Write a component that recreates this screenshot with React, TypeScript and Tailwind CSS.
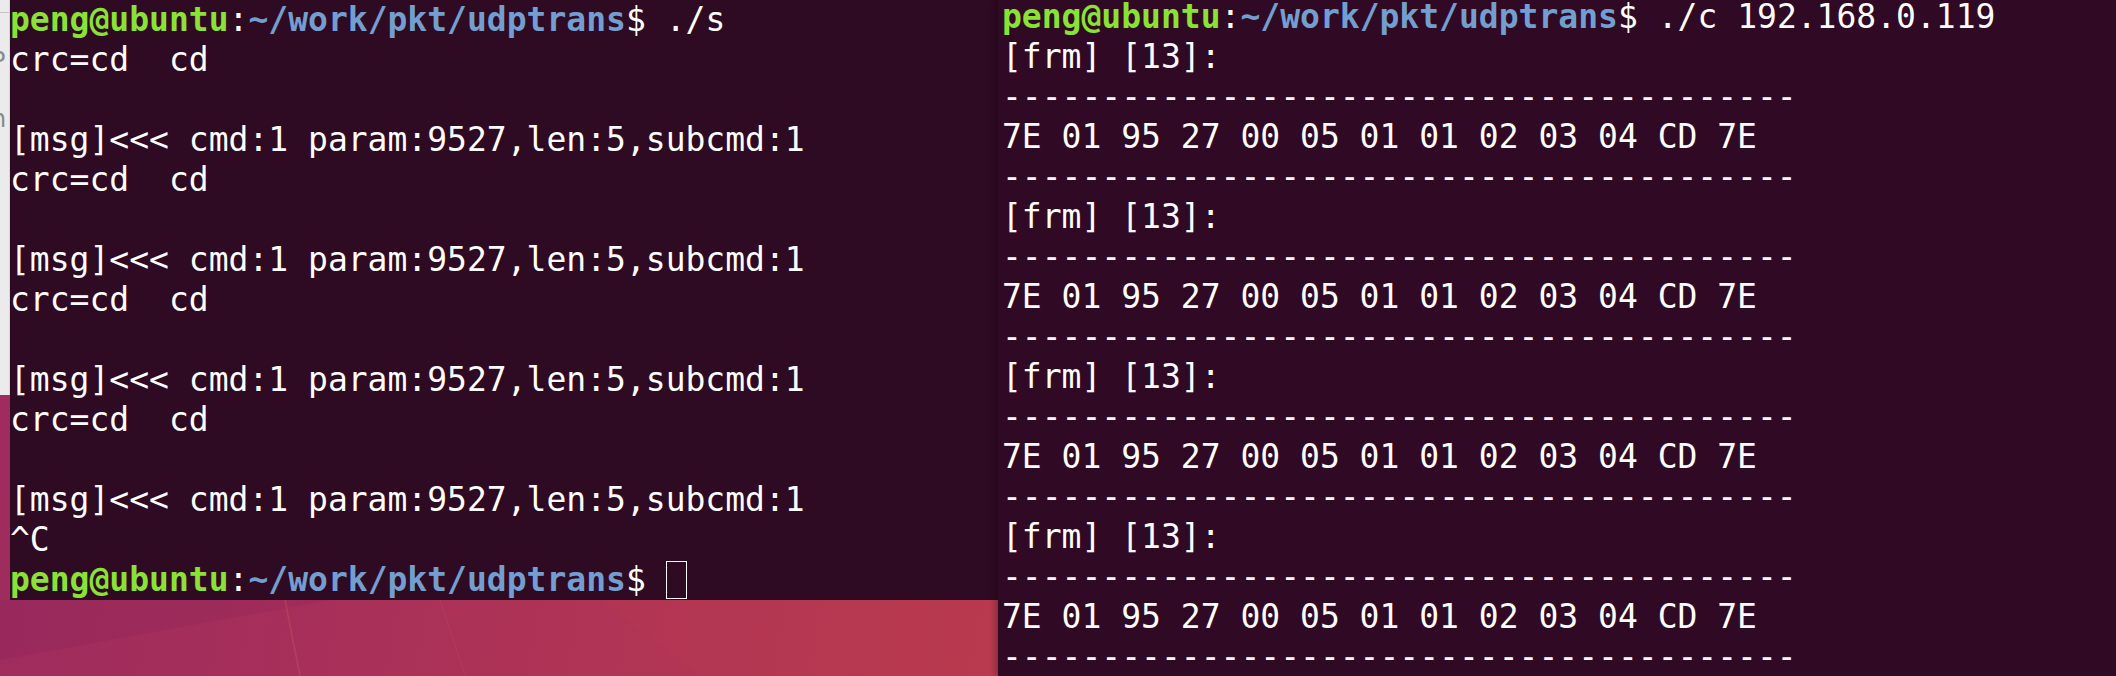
import React from "react";

const MSG = "[msg]<<< cmd:1 param:9527,len:5,subcmd:1";
const CRC = "crc=cd  cd";
const HEX = "7E 01 95 27 00 05 01 01 02 03 04 CD 7E";
const DASH = "-".repeat(40);

function Prompt(props: { cmd?: string; cursor?: boolean }) {
  return (
    <>
      <span className="font-bold text-[#8ae234]">peng@ubuntu</span>
      <span>:</span>
      <span className="font-bold text-[#729fcf]">~/work/pkt/udptrans</span>
      <span>$ </span>
      {props.cmd ? <span>{props.cmd}</span> : null}
      {props.cursor ? (
        <span className="inline-block align-top w-[21px] h-[38px] mt-[1px] border-[1.5px] border-white" />
      ) : null}
    </>
  );
}

function Line(props: { children?: React.ReactNode; first?: boolean }) {
  // the client window is scrolled a few px higher than the server one
  if (props.first) {
    return <div className="h-[37px] leading-[34px] whitespace-pre">{props.children}</div>;
  }
  return <div className="h-[40px] whitespace-pre">{props.children}</div>;
}

export default function App() {
  const leftLines: React.ReactNode[] = [
    <Prompt cmd="./s" />,
    CRC,
    "",
    MSG,
    CRC,
    "",
    MSG,
    CRC,
    "",
    MSG,
    CRC,
    "",
    MSG,
    "^C",
    <Prompt cursor />,
  ];

  const rightLines: React.ReactNode[] = [<Prompt cmd="./c 192.168.0.119" />];
  for (let i = 0; i < 4; i++) {
    rightLines.push("[frm] [13]:", DASH, HEX, DASH);
  }

  return (
    <div className="flex w-[2116px] h-[676px] overflow-hidden font-['DejaVu_Sans_Mono',monospace] text-[33px] leading-[40px] text-white">
      {/* desktop + server terminal */}
      <div className="flex flex-col w-[998px] shrink-0 bg-[linear-gradient(100deg,#9c2b5f_0%,#a62f5a_35%,#b03455_65%,#b8394f_100%)]">
        <div className="flex h-[600px]">
          <div className="flex flex-col w-[10px] shrink-0">
            <div className="h-[395px] overflow-hidden bg-[#ebebeb] border-r border-[#d6d6d6]">
              <div className="mt-[12px] h-[1px] bg-[#c4c4c4]" />
              <div className="mt-[36px] -ml-[9px] text-[24px] leading-[24px] text-[#8a8a8a] font-['DejaVu_Sans',sans-serif]">
                P
              </div>
              <div className="mt-[34px] -ml-[9px] text-[24px] leading-[24px] text-[#8a8a8a] font-['DejaVu_Sans',sans-serif]">
                n
              </div>
            </div>
          </div>
          <div className="flex-1 overflow-hidden bg-[#2f0a23]">
            {leftLines.map((l, i) => (
              <Line key={i}>{l}</Line>
            ))}
          </div>
        </div>
        <div className="flex-1">
          <svg width="998" height="76" viewBox="0 0 998 76">
            <polygon points="0,0 330,0 0,60" fill="#7a1d55" opacity="0.15" />
            <line x1="285" y1="0" x2="300" y2="76" stroke="#e06a6a" strokeWidth="1.5" opacity="0.25" />
            <line x1="440" y1="0" x2="465" y2="76" stroke="#e06a6a" strokeWidth="1" opacity="0.15" />
            <polygon points="600,0 998,0 998,76 700,76" fill="#c8414e" opacity="0.1" />
          </svg>
        </div>
      </div>

      {/* client terminal */}
      <div className="flex-1 overflow-hidden bg-[#300a24] pl-[4px] shadow-[-3px_0_6px_rgba(0,0,0,0.25)]">
        {rightLines.map((l, i) => (
          <Line key={i} first={i === 0}>
            {l}
          </Line>
        ))}
      </div>
    </div>
  );
}
